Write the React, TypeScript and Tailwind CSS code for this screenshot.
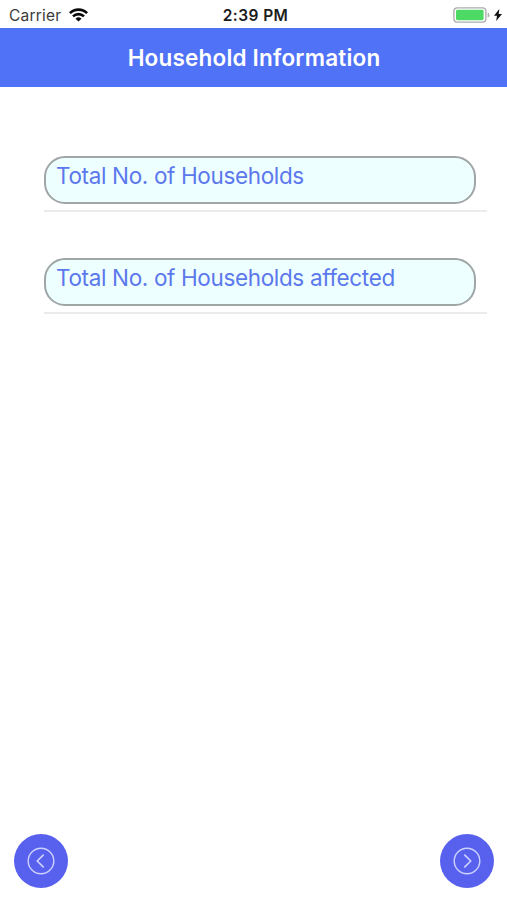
import React from "react";

function StatusBar() {
  return (
    <div className="flex h-7 shrink-0 items-center justify-between pt-[2px] text-[15.5px] leading-5 text-[#1c1c1c]">
      <div className="flex flex-1 items-center gap-2 pl-[9px]">
        <span className="pt-px tracking-[0.2px] text-[#3a3a3a]">Carrier</span>
        <svg width="19" height="14" viewBox="0 0 19 14" fill="none" stroke="#0a0a0a" strokeWidth="2.6">
          <path d="M0.9 5.2a12.2 12.2 0 0 1 17.2 0" />
          <path d="M4 8.4a7.8 7.8 0 0 1 11 0" />
          <path d="M9.5 13.6 6.5 10.7a4.3 4.3 0 0 1 6 0Z" fill="#0a0a0a" stroke="none" />
        </svg>
      </div>
      <span className="pt-px font-semibold tracking-[0.45px]">2:39 PM</span>
      <div className="flex flex-1 items-center justify-end gap-1 pr-[5px]">
        <svg width="37" height="16" viewBox="0 0 37 16">
          <rect x="0.9" y="0.9" width="32" height="14.2" rx="3.4" fill="#fff" stroke="#acacac" strokeWidth="1.4" />
          <rect x="3" y="2.8" width="27.6" height="10.4" rx="1.4" fill="#4cd964" />
          <path d="M34.7 5.4c2.2.8 2.2 4.4 0 5.2Z" fill="#acacac" />
        </svg>
        <svg width="8" height="12" viewBox="0 0 8 12" fill="#111">
          <path d="M5.3 0 0 6.7h3L2.2 12 8 4.9H4.7Z" />
        </svg>
      </div>
    </div>
  );
}

function Field({ label }: { label: string }) {
  return (
    <div className="h-[56px] border-b-2 border-[#ebebed]">
      <div className="h-12 w-[432px] rounded-[21px] border-2 border-[#a0a6a6] bg-[#eeffff] pl-[10px] pt-[4px]">
        <span className="block whitespace-nowrap text-[22.5px] leading-7 tracking-[-0.35px] text-[#5b78ec]">{label}</span>
      </div>
    </div>
  );
}

function RoundButton({ path, label }: { path: string; label: string }) {
  return (
    <button aria-label={label} className="flex size-[54px] items-center justify-center rounded-full bg-[#5861ed]">
      <svg width="28" height="28" viewBox="0 0 28 28" fill="none" stroke="#cdd2ff" strokeLinecap="round" strokeLinejoin="round">
        <circle cx="14" cy="14" r="12.8" strokeWidth="1.4" />
        <path d={path} strokeWidth="1.7" />
      </svg>
    </button>
  );
}

export default function App() {
  return (
    <div className="flex h-[900px] w-[507px] flex-col bg-white font-['Inter',sans-serif]">
      <StatusBar />
      <header className="flex h-[59px] shrink-0 items-center justify-center bg-[#4f72f6] pl-px">
        <h1 className="whitespace-nowrap text-[22.5px] font-semibold leading-7 tracking-[0.2px] text-white">Household Information</h1>
      </header>
      <main className="flex flex-1 flex-col gap-[46px] pl-[44px] pr-5 pt-[69px]">
        <Field label="Total No. of Households" />
        <Field label="Total No. of Households affected" />
      </main>
      <footer className="flex justify-between pb-3 pl-[14px] pr-[13px]">
        <RoundButton label="Previous" path="M16.2 8.2 10.2 14l6 5.8" />
        <RoundButton label="Next" path="M11.8 8.2 17.8 14l-6 5.8" />
      </footer>
    </div>
  );
}
